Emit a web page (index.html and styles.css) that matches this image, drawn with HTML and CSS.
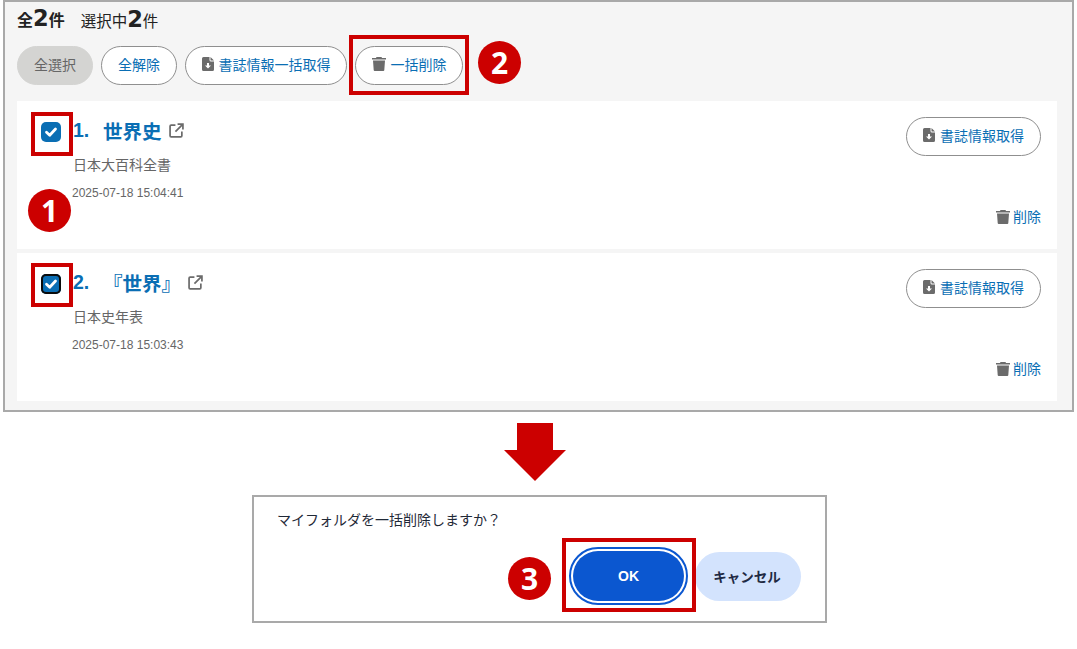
FILE: index.html
```html
<!DOCTYPE html>
<html lang="ja">
<head>
<meta charset="utf-8">
<title>マイフォルダ</title>
<link rel="stylesheet" href="styles.css">
</head>
<body>
<svg class="defs" width="0" height="0" aria-hidden="true">
  <symbol id="i-doc" viewBox="0 0 12 14"><path fill="#6b6b6b" fill-rule="evenodd" d="M1.500 0H7.500V3A1.500 1.500 0 0 0 9 4.500H12V12.500A1.500 1.500 0 0 1 10.500 14H1.500A1.500 1.500 0 0 1 0 12.500V1.500A1.500 1.500 0 0 1 1.500 0ZM5 6V8.500H3L6 11.500L9 8.500H7V6ZM8.500 0L12 3.500H9A.5 .5 0 0 1 8.500 3Z"/></symbol>
  <symbol id="i-trash" viewBox="0 0 14 14"><path fill="#6b6b6b" d="M4.500 0H9.500L10 1H14V2.600H0V1H4ZM1 3.600H13L12.300 13A1 1 0 0 1 11.300 14H2.700A1 1 0 0 1 1.700 13Z"/></symbol>
  <symbol id="i-ext" viewBox="0 0 14 14"><path fill="none" stroke="#6b6b6b" stroke-width="1.600" d="M6 2H2A1 1 0 0 0 1 3V12A1 1 0 0 0 2 13H11A1 1 0 0 0 12 12V8M8 1H13V6M13 1L6 8"/></symbol>
  <symbol id="i-check" viewBox="0 0 20 20"><path fill="none" stroke="#fff" stroke-width="2.800" stroke-linecap="round" stroke-linejoin="round" d="M5.500 10.200L8.700 13.200L14.500 7"/></symbol>
</svg>
<div class="page">
  <section class="panel">
    <div class="summary"><b class="all">全<span class="num">2</span>件</b><span class="selected">選択中<b class="num">2</b>件</span></div>
    <div class="toolbar">
      <button class="pill pill-off">全選択</button>
      <button class="pill">全解除</button>
      <button class="pill"><svg class="ic-doc"><use href="#i-doc"/></svg>書誌情報一括取得</button>
      <button class="pill pill-del"><svg class="ic-trash"><use href="#i-trash"/></svg>一括削除</button>
    </div>
    <article class="item">
      <span class="check"><svg class="ic-check"><use href="#i-check"/></svg></span>
      <div class="body">
        <h2 class="title"><span class="no">1.</span>世界史<svg class="ic-ext"><use href="#i-ext"/></svg></h2>
        <p class="book">日本大百科全書</p>
        <p class="date">2025-07-18 15:04:41</p>
      </div>
      <div class="actions">
        <button class="pill pill-get"><svg class="ic-doc"><use href="#i-doc"/></svg>書誌情報取得</button>
        <a class="del"><svg class="ic-trash"><use href="#i-trash"/></svg>削除</a>
      </div>
    </article>
    <article class="item">
      <span class="check check-focus"><svg class="ic-check"><use href="#i-check"/></svg></span>
      <div class="body">
        <h2 class="title"><span class="no">2.</span><span class="bracket">『世界』</span><svg class="ic-ext"><use href="#i-ext"/></svg></h2>
        <p class="book">日本史年表</p>
        <p class="date">2025-07-18 15:03:43</p>
      </div>
      <div class="actions">
        <button class="pill pill-get"><svg class="ic-doc"><use href="#i-doc"/></svg>書誌情報取得</button>
        <a class="del"><svg class="ic-trash"><use href="#i-trash"/></svg>削除</a>
      </div>
    </article>
  </section>
  <svg class="arrow" viewBox="0 0 62 58"><path fill="#cc0000" d="M13 0H49V27H62L31 58L0 27H13Z"/></svg>
  <section class="dialog">
    <p class="message">マイフォルダを一括削除しますか？</p>
    <div class="dialog-actions">
      <button class="ok">OK</button>
      <button class="cancel">キャンセル</button>
    </div>
  </section>
  <span class="mark mark-1"></span>
  <span class="mark mark-2"></span>
  <span class="mark mark-3"></span>
  <span class="mark mark-4"></span>
  <span class="badge badge-1">1</span>
  <span class="badge badge-2">2</span>
  <span class="badge badge-3">3</span>
</div>
</body>
</html>
```
FILE: styles.css
```css
* { box-sizing: border-box; }
html, body { margin: 0; padding: 0; background: #fff; }
body { font-family: "Liberation Sans", "Noto Sans CJK JP", sans-serif; color: #333; }
.defs { position: absolute; }
.page { position: relative; width: 1077px; height: 649px; overflow: hidden; }
p, h2 { margin: 0; }
button { font-family: inherit; }

.panel { width: 1071px; height: 412px; margin: 0 0 0 3px; border: 2px solid #a9a9a9; background: #f5f5f5; padding: 0 15px 0 12px; }
.summary { height: 38px; display: flex; align-items: center; gap: 16px; font-size: 16px; color: #222; padding-bottom: 4px; }
.selected { font-size: 15.500px; }
.num { font-family: "DejaVu Sans", sans-serif; font-size: 22.500px; font-weight: 700; line-height: 1; }
.all { font-weight: 700; }
.toolbar { display: flex; gap: 8px; height: 39px; margin: 6px 0 16px; }
.pill { height: 39px; border: 1px solid #8f8f8f; border-radius: 20px; background: #fff; color: #0a6eb4; font-size: 14px; display: inline-flex; align-items: center; justify-content: center; padding: 0 0 3px; gap: 5px; }
.toolbar .pill:nth-child(1) { width: 76px; }
.toolbar .pill:nth-child(2) { width: 76px; }
.toolbar .pill:nth-child(3) { width: 162px; }
.toolbar .pill:nth-child(4) { width: 108px; }
.pill-off { background: #d4d4d2; border-color: #d4d4d2; color: #666; }
.ic-doc { width: 12px; height: 14px; flex: none; }
.ic-trash { width: 14px; height: 14px; flex: none; }
.ic-ext { width: 15px; height: 15px; margin-left: 7px; flex: none; }
.ic-check { width: 20px; height: 20px; display: block; }

.item { height: 148px; margin-bottom: 4px; background: #fff; display: flex; padding: 16px 16px 0 24px; }
.check { width: 20px; height: 20px; margin-top: 5px; border-radius: 5px; background: #0a6eb4; flex: none; }
.check-focus { box-shadow: 0 0 0 2px #0b0b0b inset; }
.body { flex: 1; margin-left: 12px; }
.title { display: flex; align-items: center; height: 30px; padding-bottom: 3px; font-size: 19.500px; font-weight: 700; color: #0a6eb4; }
.no { width: 30px; }
.book { font-size: 14px; color: #666; margin-top: 8px; line-height: 20px; }
.date { font-size: 12px; color: #666; margin: 10px 0 0 -1px; line-height: 16px; }
.actions { display: flex; flex-direction: column; align-items: flex-end; }
.pill-get { width: 135px; }
.del { display: inline-flex; align-items: center; gap: 3px; color: #0a6eb4; font-size: 14px; margin-top: 52px; line-height: 18px; }

.arrow { display: block; width: 62px; height: 58px; margin: 11px 0 0 504px; }
.dialog { width: 575px; height: 128px; margin: 14px 0 0 252px; border: 2px solid #a9a9a9; background: #fff; padding: 13px 24px 0 23px; }
.message { font-size: 14px; line-height: 20px; color: #1f2937; }
.dialog-actions { display: flex; justify-content: flex-end; align-items: center; gap: 11px; margin-top: 21px; }
.ok { width: 111px; height: 50px; border: 0; border-radius: 25px; background: #0b57d0; color: #fff; font-size: 14px; font-weight: 700; outline: 2px solid #0b57d0; outline-offset: 2px; }
.cancel { width: 106px; height: 49px; border: 0; border-radius: 25px; background: #d3e3fd; color: #1f2a44; font-size: 13.500px; font-weight: 700; padding: 0 2px 0 0; }

.mark { position: absolute; border: 4px solid #cc0000; }
.mark-1 { left: 31px; top: 112px; width: 42px; height: 44px; }
.mark-2 { left: 31px; top: 263px; width: 42px; height: 44px; }
.mark-3 { left: 349px; top: 35px; width: 120px; height: 60px; }
.mark-4 { left: 562px; top: 538px; width: 134px; height: 74px; }
.badge { position: absolute; width: 43px; height: 43px; border-radius: 50%; background: #cc0000; color: #fff; font-family: "Open Sans", "Liberation Sans", sans-serif; font-size: 30px; font-weight: 700; display: flex; align-items: center; justify-content: center; }
.badge-1 { left: 28px; top: 189px; }
.badge-2 { left: 478px; top: 41px; }
.badge-3 { left: 508px; top: 557px; }
```
